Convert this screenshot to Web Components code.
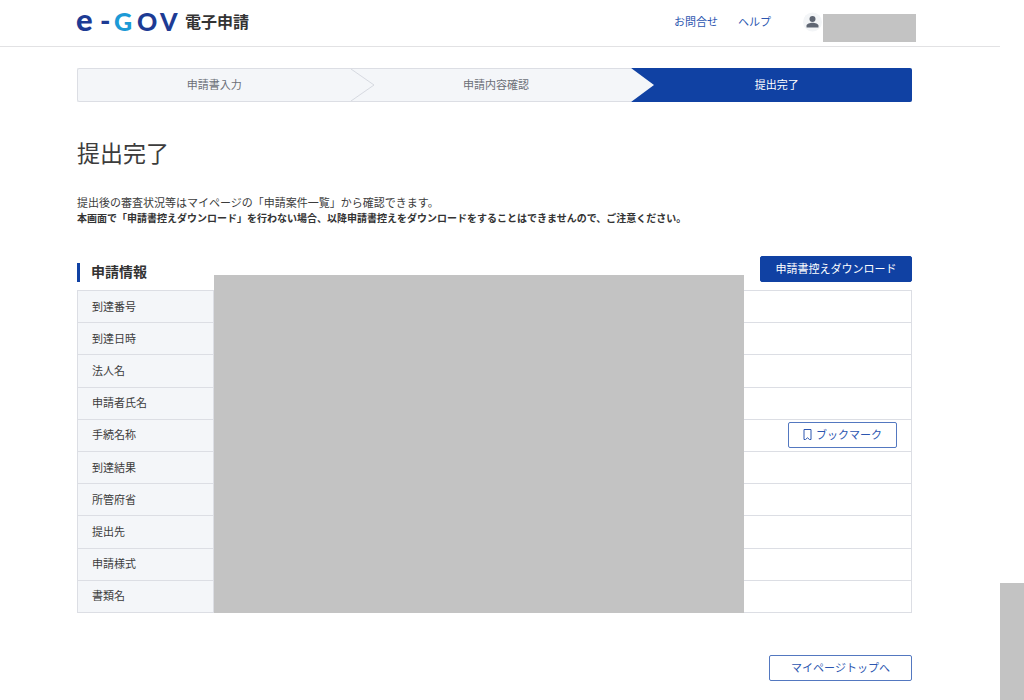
<!DOCTYPE html>
<html lang="ja">
<head>
<meta charset="utf-8">
<meta name="viewport" content="width=device-width, initial-scale=1">
<title>e-GOV 電子申請 提出完了</title>
<style>
:root { --blue:#1041a3; --link:#2c56b0; --line:#dcdee4; --pale:#f4f6f9; --ink:#3c3c3c; --mask:#c3c3c3; }
body { margin:0; background:#fff; color:var(--ink); font:11px/16px "Noto Sans CJK JP","Noto Sans",sans-serif; }
</style>
</head>
<body>
<egov-page>
  <egov-header slot="header"></egov-header>
  <step-bar>
    <step-item>申請書入力</step-item>
    <step-item>申請内容確認</step-item>
    <step-item current>提出完了</step-item>
  </step-bar>
  <page-intro>
    <span slot="title">提出完了</span>
    提出後の審査状況等はマイページの「申請案件一覧」から確認できます。
    <strong slot="note">本画面で「申請書控えダウンロード」を行わない場合、以降申請書控えをダウンロードをすることはできませんので、ご注意ください。</strong>
  </page-intro>
  <application-info></application-info>
  <page-actions><action-button kind="outline" size="wide">マイページトップへ</action-button></page-actions>
</egov-page>
<script>
const define = (name, html) => {
  const template = document.createElement('template');
  template.innerHTML = html;
  customElements.define(name, class extends HTMLElement {
    constructor() {
      super();
      this.attachShadow({ mode: 'open' }).append(template.content.cloneNode(true));
    }
  });
};

define('egov-page', `
<style>
:host { display:grid; grid-template-columns:minmax(0,1fr) 24px; min-height:100vh; }
main { padding:21px 88px 0 77px; }
.rail { display:flex; flex-direction:column; justify-content:flex-end; }
.thumb { height:117px; background:var(--mask); }
</style>
<div><slot name="header"></slot><main><slot></slot></main></div>
<div class="rail" aria-hidden="true"><div class="thumb"></div></div>`);

define('egov-header', `
<style>
:host { display:block; border-bottom:1px solid #e2e2e4; }
header { display:flex; align-items:center; height:46px; padding:0 84px 0 73px; }
.brand { display:flex; align-items:center; gap:2px; color:#333; text-decoration:none; font-size:16px; line-height:24px; font-weight:700; padding-bottom:4px; }
.brand svg { display:block; overflow:visible; }
nav { display:flex; gap:20px; margin-left:auto; padding-bottom:4px; }
nav a { color:var(--link); text-decoration:none; }
.user { display:flex; align-items:center; margin-left:32px; }
.user svg { display:block; margin-bottom:2px; }
.name { width:93px; height:28px; margin-top:10px; background:var(--mask); }
</style>
<header>
  <a class="brand" href="#">
    <svg width="110" height="46" viewBox="0 0 110 46" font-family="Lato,sans-serif" font-weight="900">
      <text fill="#1d3b94" font-size="25" y="33"><tspan x="3" font-size="31">e</tspan><tspan x="27" font-size="28">-</tspan><tspan x="41" fill="#1c9ad6">G</tspan><tspan x="64">O</tspan><tspan x="87">V</tspan></text>
    </svg>
    <span>電子申請</span>
  </a>
  <nav><a href="#">お問合せ</a><a href="#">ヘルプ</a></nav>
  <div class="user">
    <svg width="20" height="20" viewBox="0 0 20 20" aria-label="ユーザー"><circle cx="9.500" cy="10" r="9.500" fill="#f3f5f7"/><circle cx="9.500" cy="7" r="3" fill="#5f6673"/><path d="M3.500 15.500v-1.700C3.500 11.700 7 10.800 9.500 10.800s6 .9 6 3v1.700z" fill="#5f6673"/></svg>
    <div class="name"></div>
  </div>
</header>`);

define('step-bar', `
<style>
:host { display:grid; grid-template-columns:273fr 281fr 281fr; height:34px; box-sizing:border-box; border:1px solid var(--line); border-right:0; border-radius:2px; background:var(--pale); }
</style><slot></slot>`);

define('step-item', `
<style>
:host { position:relative; display:flex; align-items:center; justify-content:center; padding-bottom:2px; color:#6b6f77; }
:host(:not(:first-child)) { padding-left:10px; }
:host([current]) { background:var(--blue); color:#fff; margin:-1px 0; border-radius:0 2px 2px 0; }
svg { position:absolute; left:0; top:0; height:100%; width:23px; fill:var(--pale); stroke:#d5d8df; }
:host(:first-child) svg { display:none; }
:host([current]) svg { stroke:none; }
</style>
<svg viewBox="0 0 23 34" preserveAspectRatio="none" aria-hidden="true"><path d="M0 0L23 17L0 34"/></svg>
<slot></slot>`);

define('page-intro', `
<style>
:host { display:block; margin-top:34px; }
h1 { margin:0 0 26px; font-size:23px; line-height:32px; font-weight:400; }
p { margin:0; }
.note { font-size:10px; color:#333; }
</style>
<h1><slot name="title"></slot></h1>
<p><slot></slot></p>
<p class="note"><slot name="note"></slot></p>`);

define('action-button', `
<style>
:host { display:block; }
button { display:flex; align-items:center; justify-content:center; gap:4px; box-sizing:border-box; width:100%; height:26px; margin:0; padding:0 12px 2px; border:1px solid var(--blue); border-radius:2px; background:var(--blue); color:#fff; font:inherit; cursor:pointer; }
:host([kind=outline]) button { background:#fff; color:var(--link); border-color:#5378c0; }
:host([size=wide]) { width:143px; }
:host([size=medium]) { width:152px; }
:host([size=small]) { width:109px; }
</style>
<button type="button"><slot name="icon"></slot><slot></slot></button>`);

define('page-actions', `
<style>:host { display:flex; justify-content:flex-end; margin:42px 0 19px; }</style><slot></slot>`);

define('application-info', `
<style>
:host { display:block; margin-top:30px; }
.head { display:flex; align-items:flex-start; justify-content:space-between; height:34px; }
h2 { box-sizing:border-box; height:19px; margin:7px 0 0; padding-left:11px; border-left:3px solid var(--blue); color:#333; font-size:14px; line-height:16px; font-weight:700; }
.body { position:relative; }
table { width:100%; height:323px; border-collapse:collapse; table-layout:fixed; }
th, td { height:31px; box-sizing:border-box; padding:0 14px 2px; border:1px solid var(--line); }
td { padding-bottom:1px; }
th { width:136px; background:var(--pale); text-align:left; font-weight:400; }
td action-button { margin-left:auto; }
.mask { position:absolute; left:137px; right:168px; top:-15px; bottom:0; background:var(--mask); }
</style>
<section>
  <div class="head"><h2>申請情報</h2><action-button size="medium">申請書控えダウンロード</action-button></div>
  <div class="body">
    <table>
      <tr><th scope="row">到達番号</th><td></td></tr>
      <tr><th scope="row">到達日時</th><td></td></tr>
      <tr><th scope="row">法人名</th><td></td></tr>
      <tr><th scope="row">申請者氏名</th><td></td></tr>
      <tr><th scope="row">手続名称</th><td><action-button kind="outline" size="small"><svg slot="icon" width="9" height="12" viewBox="0 0 9 12" fill="none" stroke="currentColor"><path d="M1 1.500h7v10H6.500L4.500 9.800L2.500 11.500H1z"/></svg>ブックマーク</action-button></td></tr>
      <tr><th scope="row">到達結果</th><td></td></tr>
      <tr><th scope="row">所管府省</th><td></td></tr>
      <tr><th scope="row">提出先</th><td></td></tr>
      <tr><th scope="row">申請様式</th><td></td></tr>
      <tr><th scope="row">書類名</th><td></td></tr>
    </table>
    <div class="mask"></div>
  </div>
</section>`);
</script>
</body>
</html>
